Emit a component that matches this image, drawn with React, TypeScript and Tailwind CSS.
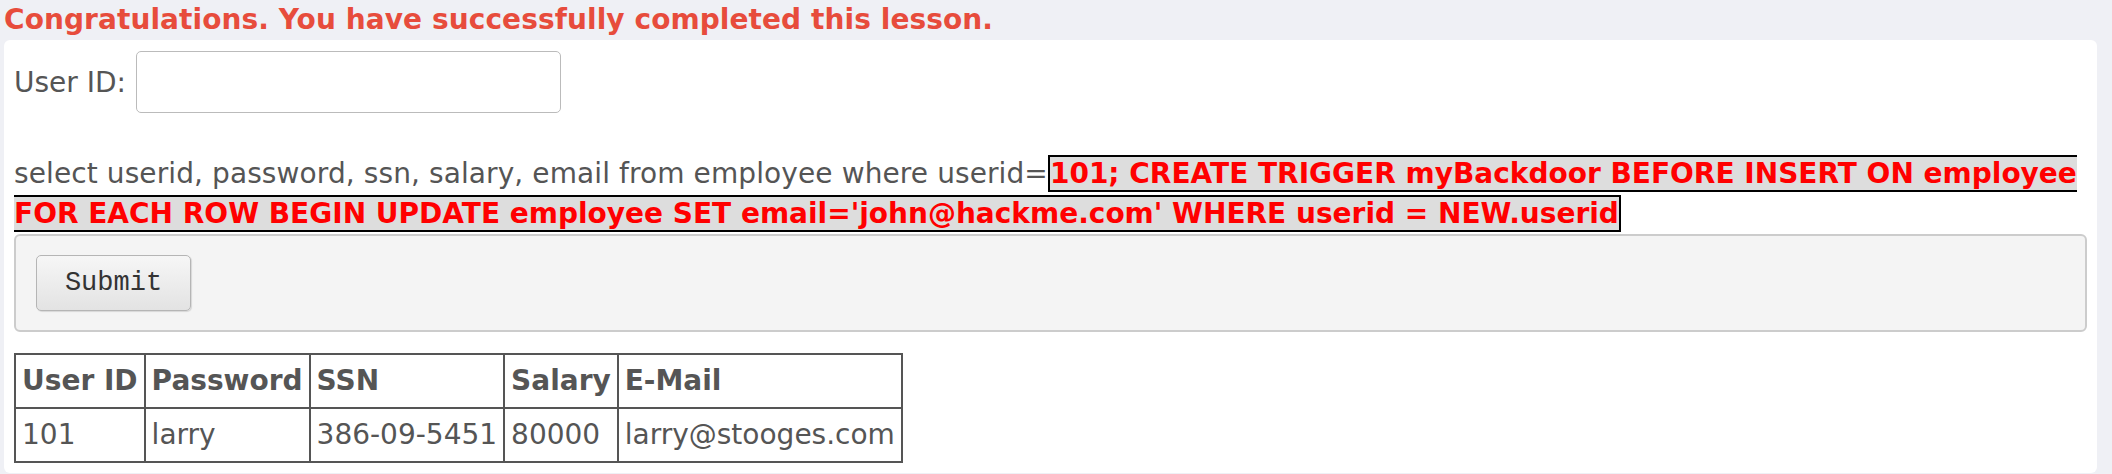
import React from "react";

const rows = [
  { id: "101", password: "larry", ssn: "386-09-5451", salary: "80000", email: "larry@stooges.com" },
];

const headers = ["User ID", "Password", "SSN", "Salary", "E-Mail"];

export default function App() {
  return (
    <div className="min-h-screen bg-[#eff0f5] font-['DejaVu_Sans',sans-serif] text-[28px] leading-[40px] text-[#555]">
      {/* lesson feedback */}
      <div className="pl-[4px] font-bold tracking-[0.08px] text-[#e74c3c]">
        Congratulations. You have successfully completed this lesson.
      </div>

      <div className="ml-[4px] mr-[15px] rounded-md bg-white px-[10px] pt-[11px] pb-[10px]">
        {/* user id form */}
        <div className="flex items-center gap-[10px]">
          <span className="pt-[2px]">User ID:</span>
          <input
            type="text"
            className="h-[62px] w-[425px] rounded-[5px] border-[1.5px] border-[#bbb] bg-white px-2 outline-none"
          />
        </div>

        {/* generated query */}
        <p className="mt-[41px]">
          <span className="tracking-[0.1px]">
            select userid, password, ssn, salary, email from employee where userid=
          </span>
          <span className="border-2 border-black bg-[#ddd] font-bold text-[#f00]">
            101; CREATE TRIGGER myBackdoor BEFORE INSERT ON employee FOR EACH ROW BEGIN UPDATE
            employee SET email='john@hackme.com' WHERE userid = NEW.userid
          </span>
        </p>

        {/* submit area */}
        <div className="rounded-md border-2 border-[#ccc] bg-[#f4f4f4] px-[20px] py-[19px]">
          <button
            type="button"
            className="h-[56px] w-[155px] rounded-[5px] border-[1.5px] border-[#b5b5b5] bg-gradient-to-b from-[#f6f6f6] to-[#e3e3e3] font-['Liberation_Mono',monospace] text-[27px] leading-none text-[#333] shadow-[1px_1px_1px_rgba(0,0,0,0.12)]"
          >
            Submit
          </button>
        </div>

        {/* results */}
        <table className="mt-[21px] border-collapse border-2 border-[#555]">
          <thead>
            <tr>
              {headers.map((h) => (
                <th key={h} className="border-2 border-[#555] px-[6px] py-[6px] text-left font-bold">
                  {h}
                </th>
              ))}
            </tr>
          </thead>
          <tbody>
            {rows.map((r) => (
              <tr key={r.id}>
                <td className="border-2 border-[#555] px-[6px] py-[6px]">{r.id}</td>
                <td className="border-2 border-[#555] px-[6px] py-[6px]">{r.password}</td>
                <td className="border-2 border-[#555] px-[6px] py-[6px]">{r.ssn}</td>
                <td className="border-2 border-[#555] px-[6px] py-[6px]">{r.salary}</td>
                <td className="border-2 border-[#555] px-[6px] py-[6px]">{r.email}</td>
              </tr>
            ))}
          </tbody>
        </table>
      </div>
    </div>
  );
}
